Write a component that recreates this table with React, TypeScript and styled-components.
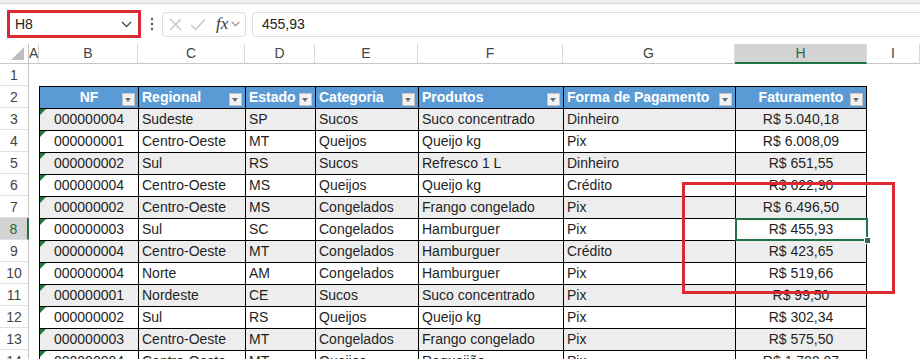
import React from "react";
import styled, { createGlobalStyle, css } from "styled-components";

const GlobalStyle = createGlobalStyle`
  html, body {
    margin: 0;
    padding: 0;
    background: #ffffff;
    overflow: hidden;
  }
  body {
    font-family: "Liberation Sans", Arial, sans-serif;
  }
`;

type Align = "left" | "center";

const letters = ["A", "B", "C", "D", "E", "F", "G", "H", "I"];

const headers: { label: string; align: Align }[] = [
  { label: "NF", align: "center" },
  { label: "Regional", align: "left" },
  { label: "Estado", align: "left" },
  { label: "Categoria", align: "left" },
  { label: "Produtos", align: "left" },
  { label: "Forma de Pagamento", align: "left" },
  { label: "Faturamento", align: "center" },
];

const aligns: Align[] = ["center", "left", "left", "left", "left", "left", "center"];

const rows = [
  ["000000004", "Sudeste", "SP", "Sucos", "Suco concentrado", "Dinheiro", "R$ 5.040,18"],
  ["000000001", "Centro-Oeste", "MT", "Queijos", "Queijo kg", "Pix", "R$ 6.008,09"],
  ["000000002", "Sul", "RS", "Sucos", "Refresco 1 L", "Dinheiro", "R$ 651,55"],
  ["000000004", "Centro-Oeste", "MS", "Queijos", "Queijo kg", "Crédito", "R$ 622,90"],
  ["000000002", "Centro-Oeste", "MS", "Congelados", "Frango congelado", "Pix", "R$ 6.496,50"],
  ["000000003", "Sul", "SC", "Congelados", "Hamburguer", "Pix", "R$ 455,93"],
  ["000000004", "Centro-Oeste", "MT", "Congelados", "Hamburguer", "Crédito", "R$ 423,65"],
  ["000000004", "Norte", "AM", "Congelados", "Hamburguer", "Pix", "R$ 519,66"],
  ["000000001", "Nordeste", "CE", "Sucos", "Suco concentrado", "Pix", "R$ 99,50"],
  ["000000002", "Sul", "RS", "Queijos", "Queijo kg", "Pix", "R$ 302,34"],
  ["000000003", "Centro-Oeste", "MT", "Congelados", "Frango congelado", "Pix", "R$ 575,50"],
  ["000000004", "Centro-Oeste", "MT", "Queijos", "Requeijão", "Pix", "R$ 1.709,07"],
];

const ACTIVE_ROW = 8;
const ACTIVE_COL = "H";

const App = () => {
  return (
    <>
      <GlobalStyle />
      <Window>
        <TopStrip />
        <FormulaBar>
          <NameBox>
            <span>H8</span>
            <svg width="11" height="7" viewBox="0 0 11 7">
              <path d="M1 1 L5.5 5.5 L10 1" fill="none" stroke="#444" strokeWidth="1.3" />
            </svg>
          </NameBox>
          <Grip>
            <svg width="4" height="14" viewBox="0 0 4 14">
              <circle cx="2" cy="2" r="1.2" fill="#555" />
              <circle cx="2" cy="7" r="1.2" fill="#555" />
              <circle cx="2" cy="12" r="1.2" fill="#555" />
            </svg>
          </Grip>
          <FxBox>
            <svg width="13" height="13" viewBox="0 0 13 13">
              <path d="M1 1 L12 12 M12 1 L1 12" stroke="#c2c2c2" strokeWidth="1.3" />
            </svg>
            <svg width="16" height="13" viewBox="0 0 16 13">
              <path d="M1 7 L5.5 11.5 L15 1.5" fill="none" stroke="#c2c2c2" strokeWidth="1.3" />
            </svg>
            <FxLabel>fx</FxLabel>
            <svg width="9" height="6" viewBox="0 0 9 6">
              <path d="M0.8 1 L4.5 4.8 L8.2 1" fill="none" stroke="#8a8a8a" strokeWidth="1.1" />
            </svg>
          </FxBox>
          <FormulaInput>455,93</FormulaInput>
        </FormulaBar>

        <Sheet>
          <Corner>
            <svg width="13" height="13" viewBox="0 0 13 13">
              <path d="M13 0 L13 13 L0 13 Z" fill="#bdbdbd" />
            </svg>
          </Corner>
          {letters.map((l) => (
            <ColHead key={l} $active={l === ACTIVE_COL}>
              {l}
            </ColHead>
          ))}

          <RowHead $active={false}>1</RowHead>
          {letters.map((l) => (
            <Cell key={`1-${l}`} $kind="blank" />
          ))}

          <RowHead $active={false}>2</RowHead>
          <Cell $kind="blank" />
          {headers.map((h, i) => (
            <Cell key={h.label} $kind="head" $align={h.align} $last={i === headers.length - 1}>
              {h.label}
              <FilterButton />
            </Cell>
          ))}
          <Cell $kind="blank" />

          {rows.map((row, r) => {
            const rowNum = r + 3;
            const kind = rowNum % 2 === 1 ? "odd" : "even";
            return (
              <React.Fragment key={rowNum}>
                <RowHead $active={rowNum === ACTIVE_ROW}>{rowNum}</RowHead>
                <Cell $kind="blank" />
                {row.map((value, c) => (
                  <Cell
                    key={c}
                    $kind={kind}
                    $align={aligns[c]}
                    $flag={c === 0}
                    $last={c === row.length - 1}
                    $selected={rowNum === ACTIVE_ROW && c === row.length - 1}
                  >
                    {value}
                  </Cell>
                ))}
                <Cell $kind="blank" />
              </React.Fragment>
            );
          })}
        </Sheet>

        <Highlight />
      </Window>
    </>
  );
};

const Window = styled.div`
  position: relative;
  width: 920px;
  height: 359px;
  overflow: hidden;
  background: #ffffff;
  font-family: "Liberation Sans", Arial, sans-serif;
  font-size: 14px;
  color: #1f1f1f;
`;

const TopStrip = styled.div`
  height: 3px;
  background: #eeeeee;
  border-bottom: 1px solid #d9d9d9;
`;

const FormulaBar = styled.div`
  height: 40px;
  display: flex;
  align-items: center;
  padding-left: 7px;
  margin-right: -20px;
`;

const NameBox = styled.div`
  box-sizing: border-box;
  width: 134px;
  height: 28px;
  border: 3px solid #dc2830;
  background: #ffffff;
  display: flex;
  align-items: center;
  justify-content: space-between;
  padding: 0 6px 0 5px;
  color: #222;
`;

const Grip = styled.div`
  display: flex;
  align-items: center;
  margin: 0 8px 0 9px;
`;

const FxBox = styled.div`
  box-sizing: border-box;
  width: 84px;
  height: 25px;
  border: 1px solid #dedede;
  border-radius: 4px;
  display: flex;
  align-items: center;
  gap: 8px;
  padding: 0 3px 0 6px;
`;

const FxLabel = styled.span`
  font-family: "Liberation Serif", "Times New Roman", serif;
  font-style: italic;
  font-size: 17px;
  color: #3a3a3a;
  margin-left: 2px;
  margin-right: -5px;
`;

const FormulaInput = styled.div`
  box-sizing: border-box;
  flex: 1;
  height: 25px;
  margin-left: 6px;
  border: 1px solid #dedede;
  border-radius: 4px;
  display: flex;
  align-items: center;
  padding-left: 9px;
  color: #222;
`;

const Sheet = styled.div`
  display: grid;
  grid-template-columns: 29px 10px 99px 107px 70px 103px 145px 172px 132px 1fr;
  grid-template-rows: 20px;
  grid-auto-rows: 22px;
`;

const Corner = styled.div`
  box-sizing: border-box;
  border-right: 1px solid #c6c6c6;
  border-bottom: 1px solid #c6c6c6;
  display: flex;
  align-items: flex-end;
  justify-content: flex-end;
  padding: 0 4px 3px 0;
`;

const ColHead = styled.div<{ $active: boolean }>`
  box-sizing: border-box;
  text-align: center;
  line-height: 19px;
  color: #444;
  border-right: 1px solid #dadada;
  border-bottom: 1px solid #c6c6c6;
  background: #ffffff;
  ${(p) =>
    p.$active &&
    css`
      background: #d3d3d3;
      color: #1f6b40;
      border-bottom: 2px solid #217346;
    `}
`;

const RowHead = styled.div<{ $active: boolean }>`
  box-sizing: border-box;
  text-align: center;
  line-height: 22px;
  color: #444;
  border-right: 1px solid #c6c6c6;
  border-bottom: 1px solid #e1e1e1;
  background: #ffffff;
  ${(p) =>
    p.$active &&
    css`
      background: #d3d3d3;
      color: #1f6b40;
      border-right: 2px solid #217346;
    `}
`;

type CellProps = {
  $kind: "blank" | "head" | "odd" | "even";
  $align?: Align;
  $flag?: boolean;
  $last?: boolean;
  $selected?: boolean;
};

const Cell = styled.div<CellProps>`
  box-sizing: border-box;
  position: relative;
  padding: 0 3px;
  line-height: 21px;
  white-space: nowrap;
  text-align: ${(p) => p.$align ?? "left"};
  ${(p) =>
    p.$kind !== "blank" &&
    css`
      border-top: 1px solid #000;
      border-left: 1px solid #000;
    `}
  ${(p) => p.$last && "border-right: 1px solid #000;"}
  ${(p) =>
    p.$kind === "head" &&
    css`
      background: #5b9bd5;
      color: #ffffff;
      font-weight: 700;
    `}
  ${(p) => p.$kind === "odd" && "background: #ededed;"}
  ${(p) => p.$kind === "even" && "background: #ffffff;"}
  ${(p) =>
    p.$flag &&
    css`
      &::before {
        content: "";
        position: absolute;
        top: 0;
        left: 0;
        border-top: 6px solid #1e7b3c;
        border-right: 6px solid transparent;
      }
    `}
  ${(p) =>
    p.$selected &&
    css`
      z-index: 2;
      &::after {
        content: "";
        position: absolute;
        top: -1px;
        left: -1px;
        right: -2px;
        bottom: -1px;
        border: 2px solid #217346;
      }
      &::before {
        content: "";
        position: absolute;
        right: -5px;
        bottom: -4px;
        width: 5px;
        height: 5px;
        background: #217346;
        border: 1px solid #ffffff;
        z-index: 3;
      }
    `}
`;

const FilterButton = styled.span`
  position: absolute;
  right: 3px;
  top: 6px;
  box-sizing: border-box;
  width: 13px;
  height: 13px;
  background: #f2f2f2;
  border: 1px solid #c4c4c4;
  &::after {
    content: "";
    position: absolute;
    left: 2px;
    top: 4px;
    border-top: 4px solid #6e6e6e;
    border-left: 3.5px solid transparent;
    border-right: 3.5px solid transparent;
  }
`;

const Highlight = styled.div`
  position: absolute;
  left: 682px;
  top: 182px;
  width: 213px;
  height: 112px;
  box-sizing: border-box;
  border: 3px solid #dc2830;
  pointer-events: none;
`;

export default App;
